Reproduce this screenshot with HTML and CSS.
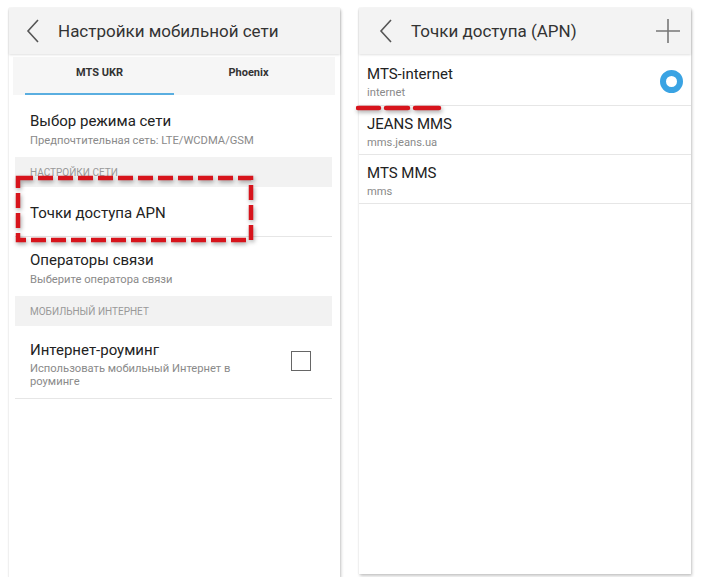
FILE: index.html
```html
<!DOCTYPE html>
<html lang="ru">
<head>
    <meta charset="UTF-8">
    <title>Настройки мобильной сети</title>
    <link rel="stylesheet" href="styles.css">
</head>
<body>
    <div class="screens">
        <div class="phone phone-left">
            <div class="topbar">
                <svg class="back" width="14" height="24" viewBox="0 0 14 24"><path d="M12 1 L2 12 L12 23" fill="none" stroke="#555" stroke-width="1.6"/></svg>
                <span class="topbar-title">Настройки мобильной сети</span>
            </div>
            <div class="tabs">
                <div class="tab active">MTS UKR</div>
                <div class="tab">Phoenix</div>
            </div>
            <div class="list">
                <div class="row row-first">
                    <div class="row-title">Выбор режима сети</div>
                    <div class="row-sub">Предпочтительная сеть: LTE/WCDMA/GSM</div>
                </div>
                <div class="section">НАСТРОЙКИ СЕТИ</div>
                <div class="row row-apn">
                    <div class="row-title">Точки доступа APN</div>
                </div>
                <div class="row row-ops">
                    <div class="row-title">Операторы связи</div>
                    <div class="row-sub">Выберите оператора связи</div>
                </div>
                <div class="section">МОБИЛЬНЫЙ ИНТЕРНЕТ</div>
                <div class="row row-roaming">
                    <div class="row-text">
                        <div class="row-title">Интернет-роуминг</div>
                        <div class="row-sub">Использовать мобильный Интернет в роуминге</div>
                    </div>
                    <div class="checkbox"></div>
                </div>
            </div>
            <svg class="mark mark-box" width="242" height="71" viewBox="0 0 242 71">
                <rect x="3" y="3" width="233" height="62" fill="none" stroke="#d7141c" stroke-width="4.5" stroke-dasharray="15 5"/>
            </svg>
        </div>

        <div class="phone phone-right">
            <div class="topbar">
                <svg class="back" width="14" height="24" viewBox="0 0 14 24"><path d="M12 1 L2 12 L12 23" fill="none" stroke="#555" stroke-width="1.6"/></svg>
                <span class="topbar-title">Точки доступа (APN)</span>
                <svg class="plus" width="24" height="24" viewBox="0 0 24 24"><path d="M12 0 V24 M0 12 H24" stroke="#777" stroke-width="1.6"/></svg>
            </div>
            <div class="apn-list">
                <div class="apn">
                    <div class="row-text">
                        <div class="row-title">MTS-internet</div>
                        <div class="row-sub">internet</div>
                    </div>
                    <div class="radio"></div>
                </div>
                <div class="apn">
                    <div class="row-text">
                        <div class="row-title">JEANS MMS</div>
                        <div class="row-sub">mms.jeans.ua</div>
                    </div>
                </div>
                <div class="apn">
                    <div class="row-text">
                        <div class="row-title">MTS MMS</div>
                        <div class="row-sub">mms</div>
                    </div>
                </div>
            </div>
            <svg class="mark mark-line" width="86" height="8" viewBox="0 0 86 8">
                <path d="M2 4 H23 M30 4 H52 M59 4 H83" stroke="#d7141c" stroke-width="4.5" stroke-linecap="round"/>
            </svg>
        </div>
    </div>
</body>
</html>
```

FILE: styles.css
```css
body {
  margin: 0;
  background-color: #fff;
  font-family: Roboto, "Noto Sans", Arial, sans-serif;
  color: #222;
}

.screens {
  display: flex;
  gap: 19px;
  padding: 8px 0 0 9px;
  align-items: flex-start;
}

.phone {
  position: relative;
  background-color: #fff;
  box-shadow: 1px 2px 3px rgba(0, 0, 0, 0.22), 0 0 1px rgba(0, 0, 0, 0.15);
}

.phone-left {
  width: 331px;
  height: 569px;
}

.phone-right {
  width: 332px;
  height: 566px;
}

.topbar {
  height: 46px;
  display: flex;
  align-items: center;
  background-color: #f3f3f3;
  box-shadow: 0 1px 2px rgba(0, 0, 0, 0.12);
  position: relative;
  z-index: 1;
}

.back {
  margin-left: 17px;
  margin-right: 18px;
}

.topbar-title {
  font-size: 17px;
  color: #333;
}

.phone-right .back {
  margin-left: 20px;
  margin-right: 18px;
}

.plus {
  margin-left: auto;
  margin-right: 11px;
}

.tabs {
  display: flex;
  margin: 3px 5px 0 4px;
  padding: 0 12px;
  height: 38px;
  background-color: #f6f6f6;
}

.tab {
  flex: 1;
  text-align: center;
  font-size: 11px;
  font-weight: bold;
  color: #333;
  padding-top: 9px;
  box-sizing: border-box;
}

.tab.active {
  border-bottom: 2px solid #5aaee0;
}

.list {
  margin: 0 8px 0 6px;
}

.row {
  padding-left: 15px;
  border-bottom: 1px solid #e6e6e6;
  box-sizing: border-box;
}

.row-title {
  font-size: 15px;
  color: #222;
  line-height: 18px;
}

.row-sub {
  font-size: 11.2px;
  color: #8a8a8a;
  line-height: 13px;
  margin-top: 4px;
}

.row-first {
  height: 62px;
  padding-top: 17px;
  border-bottom: none;
}

.section {
  height: 30px;
  background-color: #f2f2f2;
  font-size: 10px;
  color: #999;
  padding-left: 15px;
  line-height: 31px;
}

.row-apn {
  height: 50px;
  padding-top: 17px;
}

.row-ops {
  height: 59px;
  padding-top: 14px;
  border-bottom: none;
}

.row-roaming {
  height: 73px;
  padding-top: 15px;
  display: flex;
  align-items: flex-start;
}

.row-roaming .row-text {
  width: 210px;
}

.row-roaming .row-sub {
  margin-top: 3px;
}

.checkbox {
  width: 18px;
  height: 18px;
  border: 1.5px solid #666;
  margin: 10px 21px 0 auto;
}

.apn-list {
  margin-top: 2px;
}

.apn {
  display: flex;
  align-items: center;
  padding: 3px 0 0 8px;
  border-bottom: 1px solid #e6e6e6;
  height: 49px;
  box-sizing: border-box;
}

.apn:first-child {
  height: 50px;
  padding-top: 2px;
}

.apn .row-sub {
  margin-top: 3px;
}

.radio {
  width: 11px;
  height: 11px;
  border: 6px solid #3aa3e3;
  border-radius: 50%;
  margin: 0 8px 0 auto;
}

.mark {
  position: absolute;
  filter: drop-shadow(1px 2px 2px rgba(0, 0, 0, 0.35));
}

.mark-box {
  left: 6px;
  top: 167px;
}

.mark-line {
  left: -3px;
  top: 96px;
}
```
